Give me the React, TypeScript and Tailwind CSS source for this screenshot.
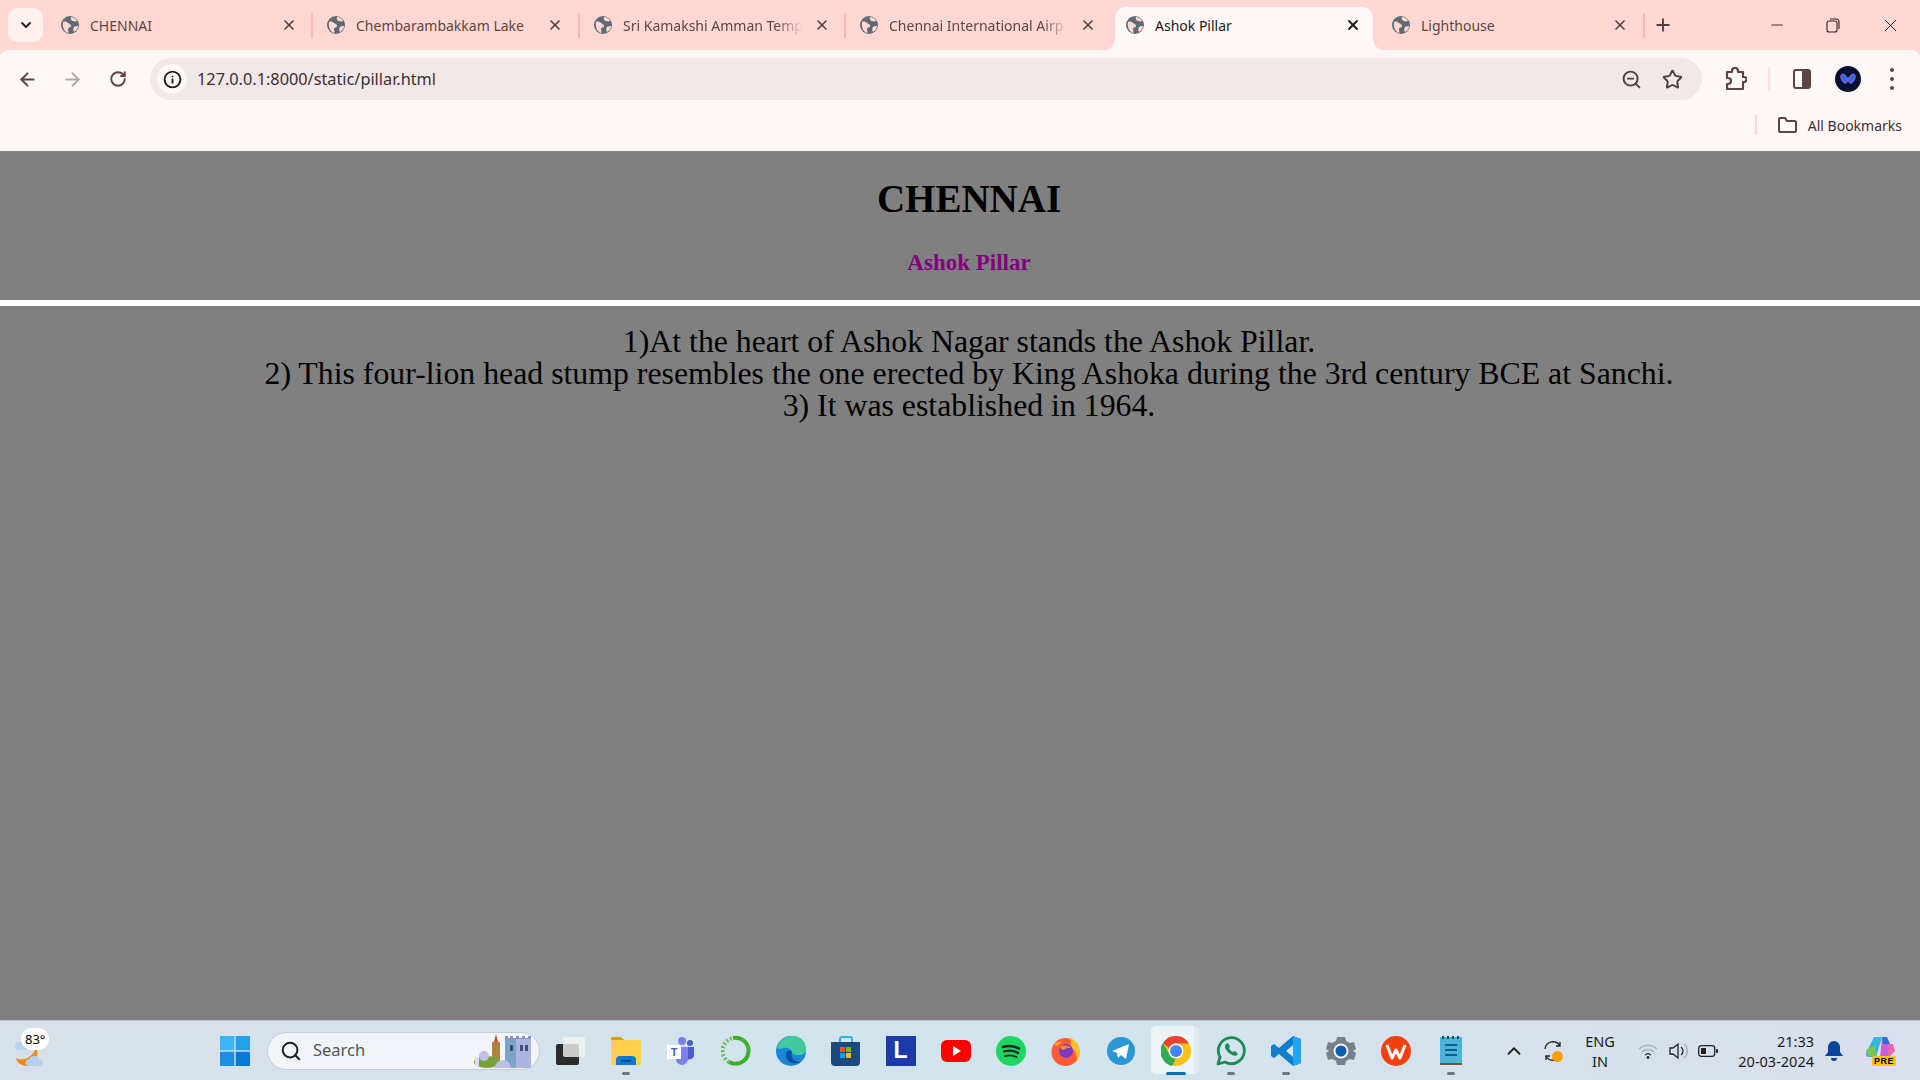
import { ArrowLeft, ArrowRight, ChevronDown, ChevronUp, Info, Minus, Plus, RotateCw, Search, Star, X, ZoomOut } from 'lucide-react';
import type { ReactNode } from 'react';

const uiFont = "font-['Noto_Sans','Open_Sans',sans-serif]";
const serif = "font-['Liberation_Serif',serif]";

function Globe() {
  return (
    <svg width="18" height="18" viewBox="0 0 18 18" className="shrink-0">
      <circle cx="9" cy="9" r="9" fill="#5f6b72" />
      <path d="M2 6c2-1 4 0 5 1s3 1 3 3-3 1-3 3 1 3 0 4C4 16 1 12 2 6zM10 1c2 0 5 1 6 4-2 1-3 0-4 0s-3-2-2-4zM13 11c1-1 3-1 4-1 0 3-2 5-4 6-1-1-1-4 0-5z" fill="#ffd8d4" />
    </svg>
  );
}

function Tab({ title, width, pad = 'pl-[16px]', faded, sep = true }: { title: string; width: string; pad?: string; faded?: boolean; sep?: boolean }) {
  return (
    <div className={`flex h-[42px] shrink-0 items-center ${pad} ${width}`}>
      <Globe />
      <span className={`ml-[11px] w-[180px] overflow-hidden whitespace-nowrap text-[14px] text-[#5b4644] ${faded ? '[mask-image:linear-gradient(to_right,black_85%,transparent)]' : ''}`}>
        {title}
      </span>
      <X size={16} strokeWidth={2.4} className="ml-[11px] shrink-0 text-[#4f3f3e]" />
      {sep && <div className="-mr-[2px] ml-auto h-[25px] w-[2px] bg-[#fdb8b2]" />}
    </div>
  );
}

function ActiveTab() {
  return (
    <div className="relative flex h-[43px] w-[258px] shrink-0 items-center self-end rounded-t-[11px] bg-[#fff8f6] pb-[7px] pl-[11px]">
      <div className="absolute -left-[11px] bottom-0 h-[11px] w-[11px] bg-[#fff8f6]">
        <div className="h-full w-full rounded-br-[11px] bg-[#ffd8d4]" />
      </div>
      <Globe />
      <span className="ml-[11px] w-[180px] text-[14px] text-[#201a1a]">Ashok Pillar</span>
      <X size={16} strokeWidth={2.8} className="ml-[10px] text-[#201a1a]" />
      <div className="absolute -right-[11px] bottom-0 h-[11px] w-[11px] bg-[#fff8f6]">
        <div className="h-full w-full rounded-bl-[11px] bg-[#ffd8d4]" />
      </div>
    </div>
  );
}

function TabStrip() {
  return (
    <div className={`flex h-[50px] shrink-0 items-start bg-[#ffd8d4] ${uiFont}`}>
      <div className="ml-[8px] mt-[8px] flex h-[34px] w-[35px] items-center justify-center rounded-[10px] bg-[#fff1ef]">
        <ChevronDown size={16} strokeWidth={3} className="text-[#33201f]" />
      </div>
      <div className="ml-[2px] flex h-[50px] items-center">
        <Tab title="CHENNAI" width="w-[266px]" />
        <Tab title="Chembarambakkam Lake" width="w-[267px]" />
        <Tab title="Sri Kamakshi Amman Temp" width="w-[266px]" faded />
        <Tab title="Chennai International Airp" width="w-[271px]" faded sep={false} />
        <ActiveTab />
        <Tab title="Lighthouse" width="w-[270px]" pad="pl-[19px]" />
        <Plus size={20} strokeWidth={2.2} className="ml-[10px] text-[#4f3f3e]" />
      </div>
      <div className="ml-auto flex h-[50px] items-center text-[#33201f]">
        <Minus size={18} strokeWidth={1.2} className="mr-[40px]" />
        <svg width="14" height="16" viewBox="0 0 14 16" fill="none" stroke="#33201f" strokeWidth="1.1" className="mr-[40px]">
          <rect x="1" y="4" width="10" height="11" rx="2" />
          <path d="M4 2h6a3 3 0 0 1 3 3v7" />
        </svg>
        <X size={21} strokeWidth={1.1} className="mr-[19px]" />
      </div>
    </div>
  );
}

function ToolIcon({ children, className }: { children: ReactNode; className: string }) {
  return <div className={`flex shrink-0 items-center justify-center ${className}`}>{children}</div>;
}

function Toolbar() {
  return (
    <div className={`h-[101px] shrink-0 rounded-t-[8px] bg-[#fff8f6] ${uiFont}`}>
      <div className="flex h-[50px] items-end">
        <ToolIcon className="ml-[16px] h-[42px] w-[22px]"><ArrowLeft size={21} strokeWidth={2.3} className="text-[#5c4442]" /></ToolIcon>
        <ToolIcon className="ml-[23px] h-[42px] w-[22px]"><ArrowRight size={21} strokeWidth={2.3} className="text-[#b3a6a5]" /></ToolIcon>
        <ToolIcon className="ml-[24px] h-[42px] w-[22px]"><RotateCw size={18} strokeWidth={2.6} className="text-[#5c4442]" /></ToolIcon>
        <div className="ml-[21px] flex h-[42px] w-[1552px] items-center rounded-full bg-[#f1e8e9]">
          <div className="ml-[7px] flex h-[30px] w-[30px] items-center justify-center rounded-full bg-[#fff8f6]">
            <Info size={19} strokeWidth={2.4} className="text-[#201a1a]" />
          </div>
          <span className="ml-[10px] text-[16.3px] text-[#3f2e2d]">127.0.0.1:8000/static/pillar.html</span>
          <ZoomOut size={21} strokeWidth={2.2} className="ml-auto text-[#4f3f3e]" />
          <Star size={21} strokeWidth={2.2} className="ml-[20px] mr-[19px] text-[#4f3f3e]" />
        </div>
        <ToolIcon className="ml-[22px] h-[42px] w-[24px]">
          <svg width="22" height="24" viewBox="0 0 22 24" fill="none" stroke="#5c4442" strokeWidth="2.2" strokeLinejoin="round">
            <path d="M2 5h5V4a3 3 0 0 1 6 0v1h5v5h1a2 2 0 0 1 0 5h-1v7H2v-5h1a3 3 0 0 0 0-6H2z" />
          </svg>
        </ToolIcon>
        <div className="mb-[9px] ml-[20px] h-[24px] w-[2px] bg-[#ffdfdb]" />
        <ToolIcon className="ml-[23px] h-[42px] w-[18px]">
          <svg width="18" height="20" viewBox="0 0 18 20">
            <rect x="1" y="1" width="16" height="18" rx="2" fill="none" stroke="#5c4442" strokeWidth="2" />
            <rect x="9" y="1" width="8" height="18" fill="#5c4442" />
          </svg>
        </ToolIcon>
        <ToolIcon className="ml-[24px] h-[42px] w-[26px]">
          <svg width="26" height="26" viewBox="0 0 26 26">
            <circle cx="13" cy="13" r="13" fill="#04102e" />
            <path d="M13 13C11 8 7 7 6 9s1 7 3 8c2 1 4-1 4-4zM13 13c2-5 6-6 7-4s-1 7-3 8c-2 1-4-1-4-4z" fill="#2f6de0" stroke="#b14ad6" strokeWidth="1" />
          </svg>
        </ToolIcon>
        <ToolIcon className="ml-[29px] h-[42px] w-[4px]">
          <div className="flex flex-col gap-[5px]">
            <div className="h-[4px] w-[4px] rounded-full bg-[#5c4442]" />
            <div className="h-[4px] w-[4px] rounded-full bg-[#5c4442]" />
            <div className="h-[4px] w-[4px] rounded-full bg-[#5c4442]" />
          </div>
        </ToolIcon>
      </div>
      <div className="flex h-[50px] items-center justify-end pr-[18px]">
        <div className="h-[20px] w-[2px] bg-[#ffd8d4]" />
        <svg width="21" height="18" viewBox="0 0 21 18" fill="none" stroke="#5c4442" strokeWidth="2" className="ml-[20px]">
          <path d="M2 3a1 1 0 0 1 1-1h5l2 3h8a1 1 0 0 1 1 1v9a1 1 0 0 1-1 1H3a1 1 0 0 1-1-1z" />
        </svg>
        <span className="ml-[10px] text-[14px] text-[#3f2e2d]">All Bookmarks</span>
      </div>
    </div>
  );
}

function Page() {
  return (
    <main className={`min-h-0 flex-1 bg-[#808080] text-center ${serif}`}>
      <div className="pl-[18px]">
        <h1 className="pt-[26px] text-[39px] font-bold leading-[44px] text-black">CHENNAI</h1>
        <h2 className="mt-[29px] text-[23px] font-bold leading-[26px] text-[#800080]">Ashok Pillar</h2>
      </div>
      <hr className="mt-[24px] h-[6px] border-0 bg-white" />
      <p className="mt-[20px] pl-[18px] text-[31.8px] leading-[32px] text-black">
        1)At the heart of Ashok Nagar stands the Ashok Pillar.
        <br />
        2) This four-lion head stump resembles the one erected by King Ashoka during the 3rd century BCE at Sanchi.
        <br />
        3) It was established in 1964.
      </p>
    </main>
  );
}

function AppCell({ children, pill, active }: { children: ReactNode; pill?: boolean; active?: boolean }) {
  return (
    <div className="relative flex h-[59px] w-[55px] shrink-0 items-center justify-center">
      {active && <div className="absolute left-[3px] top-[5px] h-[48px] w-[48px] rounded-[5px] border-r-[5px] border-[#dfeaf1] bg-[#edf4f8]" />}
      <div className="relative">{children}</div>
      {pill && <div className={`absolute bottom-[5px] h-[3px] rounded-full ${active ? 'w-[20px] bg-[#0f6cbd]' : 'w-[8px] bg-[#6d7780]'}`} />}
    </div>
  );
}

const icons: { key: string; pill?: boolean; active?: boolean; svg: ReactNode }[] = [
  {
    key: 'taskview',
    svg: (
      <svg width="30" height="30" viewBox="0 0 30 30">
        <rect x="0" y="8" width="23" height="21" rx="2" fill="#2a2a2a" />
        <rect x="7" y="1" width="22" height="20" rx="2" fill="#f3f3f3" fillOpacity=".8" />
      </svg>
    ),
  },
  {
    key: 'explorer',
    pill: true,
    svg: (
      <svg width="30" height="30" viewBox="0 0 30 30">
        <path d="M0 2a1 1 0 0 1 1-1h9l3 3h-13z" fill="#d99e0b" />
        <rect x="0" y="4" width="30" height="25" rx="1" fill="#ffcf4d" />
        <path d="M5 24a4 4 0 0 1 4-4h12a4 4 0 0 1 4 4v5H5z" fill="#0f78cf" />
        <rect x="10" y="24" width="10" height="1.5" fill="#083f7a" />
      </svg>
    ),
  },
  {
    key: 'teams',
    svg: (
      <svg width="30" height="30" viewBox="0 0 30 30">
        <circle cx="16" cy="5" r="4" fill="#7b83eb" />
        <circle cx="24" cy="7" r="3" fill="#5059c9" />
        <path d="M20 11h8v9a5 5 0 0 1-7 3z" fill="#5059c9" />
        <path d="M9 11h13v12a6 6 0 0 1-12 0z" fill="#7b83eb" />
        <rect x="1" y="9" width="14" height="14" fill="#fff" />
        <text x="8" y="20" textAnchor="middle" fontSize="11" fontWeight="700" fill="#4b53bc" fontFamily="Liberation Sans">T</text>
      </svg>
    ),
  },
  {
    key: 'ring',
    svg: (
      <svg width="30" height="30" viewBox="0 0 30 30" fill="none">
        <path d="M12 2a13 13 0 1 1-4 24" stroke="#3fae2a" strokeWidth="4" />
        <path d="M8 26A13 13 0 0 1 12 2" stroke="#6cbf5a" strokeWidth="4" strokeDasharray="2 2" />
      </svg>
    ),
  },
  {
    key: 'edge',
    svg: (
      <svg width="30" height="30" viewBox="0 0 30 30">
        <circle cx="15" cy="15" r="15" fill="#1a86d8" />
        <path d="M1 11C4 2 12 0 17 0c8 0 13 6 13 13 0 5-4 6-8 6-5 0-6-2-6-3 0-3-5-5-9-4-3 1-5 2-6-1z" fill="#43c9a0" />
        <path d="M16 16c-4-4-8 1-5 7 2 4 7 6 13 3-6 0-10-4-8-10z" fill="#0c4f9e" />
      </svg>
    ),
  },
  {
    key: 'store',
    svg: (
      <svg width="30" height="30" viewBox="0 0 30 30">
        <path d="M9 6V3a2 2 0 0 1 2-2h8a2 2 0 0 1 2 2v3" fill="none" stroke="#29b5e8" strokeWidth="2" />
        <path d="M0 6h29v20a4 4 0 0 1-4 4H4a4 4 0 0 1-4-4z" fill="#1d4a7e" />
        <rect x="9" y="11" width="5" height="5" fill="#f25022" />
        <rect x="15" y="11" width="5" height="5" fill="#7fba00" />
        <rect x="9" y="17" width="5" height="5" fill="#00a4ef" />
        <rect x="15" y="17" width="5" height="5" fill="#ffb900" />
      </svg>
    ),
  },
  {
    key: 'lens',
    svg: (
      <div className="flex h-[30px] w-[30px] items-center justify-center bg-[#1d3aa8] font-['Liberation_Sans',sans-serif] text-[23px] font-bold text-white">L</div>
    ),
  },
  {
    key: 'youtube',
    svg: (
      <svg width="30" height="22" viewBox="0 0 30 22">
        <rect width="30" height="22" rx="6" fill="#f00" />
        <path d="M12 6l8 5-8 5z" fill="#fff" />
      </svg>
    ),
  },
  {
    key: 'spotify',
    svg: (
      <svg width="30" height="30" viewBox="0 0 30 30" fill="none" stroke="#15232a" strokeLinecap="round">
        <circle cx="15" cy="15" r="15" fill="#1ed760" stroke="none" />
        <path d="M7 11c6-2 11-1 16 1.500" strokeWidth="2.600" />
        <path d="M8 15.500c5-1.500 10-1 14 1.500" strokeWidth="2.200" />
        <path d="M9 20c4-1 8-.8 11.500 1" strokeWidth="1.900" />
      </svg>
    ),
  },
  {
    key: 'firefox',
    svg: (
      <svg width="30" height="30" viewBox="0 0 30 30">
        <circle cx="14.500" cy="16" r="14" fill="#ff5a36" />
        <path d="M19 1c4 3 10 8 10 15 0 4-1 6-3 9 0-6-2-12-7-14 1-3 1-6 0-10z" fill="#ffbd2e" />
        <path d="M3 8c2-2 5-3 8-2-1 2-4 2-4 4-2 0-3-1-4-2z" fill="#ff9a2e" />
        <circle cx="15" cy="15" r="7" fill="#7a3bc2" />
        <path d="M9 11c3-2 8-2 11 1-3 0-6 0-7 2-2 0-3-1-4-3z" fill="#ff8a2e" />
      </svg>
    ),
  },
  {
    key: 'telegram',
    svg: (
      <svg width="28" height="28" viewBox="0 0 28 28">
        <circle cx="14" cy="14" r="14" fill="#2a97d4" />
        <path d="M5 14l17-7-3 15-5-4-3 3-1-5z" fill="#fff" />
      </svg>
    ),
  },
  {
    key: 'chrome',
    pill: true,
    active: true,
    svg: (
      <svg width="30" height="30" viewBox="0 0 30 30">
        <circle cx="15" cy="15" r="15" fill="#fbc116" />
        <path d="M15 0a15 15 0 0 1 13 7.500H15a7.500 7.500 0 0 0-7 4.500L2 7a15 15 0 0 1 13-7z" fill="#ea4335" />
        <path d="M2 7l6.500 11.500a7.500 7.500 0 0 0 6.500 4L11 30A15 15 0 0 1 2 7z" fill="#34a853" />
        <circle cx="15" cy="15" r="7.500" fill="#fff" />
        <circle cx="15" cy="15" r="6" fill="#4285f4" />
      </svg>
    ),
  },
  {
    key: 'whatsapp',
    pill: true,
    svg: (
      <svg width="30" height="30" viewBox="0 0 30 30" fill="none">
        <path d="M2 28l2-7a13 13 0 1 1 5 5z" stroke="#1d8a55" strokeWidth="2.800" strokeLinejoin="round" />
        <path d="M10 8c-2 2-1 6 3 9s7 4 9 1l-3-3-2 1c-2-1-3-2-4-4l1-2-2-3z" fill="#1d8a55" />
      </svg>
    ),
  },
  {
    key: 'vscode',
    pill: true,
    svg: (
      <svg width="30" height="30" viewBox="0 0 30 30">
        <path d="M22 0l8 3v24l-8 3-14-12-5 4-3-2v-10l3-2 5 4z" fill="#0f7fcc" />
        <path d="M22 0l8 3v24l-8 3z" fill="#23a6f0" />
        <path d="M22 9l-7 6 7 6z" fill="#d5e3ea" />
      </svg>
    ),
  },
  {
    key: 'settings',
    svg: (
      <svg width="30" height="30" viewBox="0 0 30 30">
        <path d="M11 1h8l1 4 4 2 4-1 2 7-3 2 3 2-2 7-4-1-4 2-1 4h-8l-1-4-4-2-4 1-2-7 3-2-3-2 2-7 4 1 4-2z" fill="#76808a" />
        <circle cx="15" cy="15" r="7.500" fill="#eef3f6" />
        <circle cx="15" cy="15" r="5.500" fill="#0f5fb0" />
      </svg>
    ),
  },
  {
    key: 'wps',
    svg: (
      <svg width="30" height="30" viewBox="0 0 30 30" fill="none">
        <circle cx="15" cy="15" r="15" fill="#f4400f" />
        <path d="M6 9l5 13 4-8 4 8 5-13" stroke="#fff" strokeWidth="3" strokeLinejoin="round" />
      </svg>
    ),
  },
  {
    key: 'notepad',
    pill: true,
    svg: (
      <svg width="22" height="30" viewBox="0 0 22 30">
        <rect y="1" width="22" height="28" rx="1" fill="#4cb4d8" />
        <rect y="27" width="22" height="2" fill="#8a4b1f" />
        <path d="M2 0h2v3H2zM7 0h2v3H7zM12 0h2v3h-2zM17 0h2v3h-2z" fill="#0f4c6e" />
        <path d="M5 9h12M5 14h12M5 19h12" stroke="#0f5f88" strokeWidth="1.800" />
      </svg>
    ),
  },
];

function WeatherIcon() {
  return (
    <div className="relative ml-[12px] h-[46px] w-[42px]">
      <svg width="34" height="38" viewBox="0 0 34 38" className="absolute left-0 top-[6px]">
        <path d="M3 12a4 4 0 0 1 4-4h8v8H6a3 3 0 0 1-3-4z" fill="#b8d3f0" />
        <path d="M4 24c3 2 9 2 13-1s6-6 7-9c4 6 0 18-9 18-5 0-10-3-11-8z" fill="#f08a12" />
        <path d="M14 31a4 4 0 0 1 3-6 6 6 0 0 1 11 1 3 3 0 0 1 0 6H16z" fill="#b5d0ee" />
      </svg>
      <div className={`absolute left-[9px] top-0 rounded-full bg-white px-[4px] text-[13px] leading-[22px] text-black ${uiFont}`}>83°</div>
    </div>
  );
}

function SearchArt() {
  return (
    <svg width="62" height="36" viewBox="0 0 62 36" className="ml-auto mr-[6px]">
      <rect x="34" y="6" width="26" height="29" fill="#aeb4e0" />
      <rect x="34" y="6" width="11" height="29" fill="#7fa4c9" />
      <path d="M34 6h26V3h-3v2h-3V3h-3v2h-3V3h-3v2h-3V3h-3v2h-2V3h-3z" fill="#8a90c4" />
      <rect x="39" y="12" width="3" height="6" fill="#3b4d70" />
      <rect x="49" y="12" width="3" height="6" fill="#3b4d70" />
      <rect x="54" y="12" width="3" height="6" fill="#3b4d70" />
      <rect x="21" y="9" width="8" height="22" fill="#b0833c" />
      <path d="M25 1l2 8h-4z" fill="#c9462c" />
      <ellipse cx="16" cy="29" rx="13" ry="6" fill="#7aa03a" />
      <circle cx="13" cy="23" r="5" fill="#c6bfe6" />
      <rect x="4" y="24" width="4" height="9" fill="#d9dcf0" />
      <path d="M24 35a8 8 0 0 1 16 0z" fill="#c2bce8" />
    </svg>
  );
}

function Taskbar() {
  return (
    <footer className={`flex h-[60px] shrink-0 items-center border-t border-[#b9c0c8] bg-gradient-to-r from-[#d8e1eb] via-[#d1e4ec] to-[#d9dfeb] text-[#1b1b1b] ${uiFont}`}>
      <WeatherIcon />
      <svg width="30" height="30" viewBox="0 0 30 30" className="ml-[166px] shrink-0">
        <rect width="14.300" height="14.300" fill="#3bb5f4" />
        <rect x="15.700" width="14.300" height="14.300" fill="#22a0ea" />
        <rect y="15.700" width="14.300" height="14.300" fill="#1b8fe2" />
        <rect x="15.700" y="15.700" width="14.300" height="14.300" fill="#0a78d6" />
      </svg>
      <div className="ml-[17px] flex h-[38px] w-[273px] shrink-0 items-center rounded-full border border-[#c2ccd6] bg-[#f1f5f9]">
        <Search size={22} strokeWidth={2.2} className="ml-[12px] text-[#1f1f1f]" />
        <span className="ml-[11px] text-[16.5px] text-[#555]">Search</span>
        <SearchArt />
      </div>
      <div className="ml-[3px] flex">
        {icons.map((icon) => (
          <AppCell key={icon.key} pill={icon.pill} active={icon.active}>
            {icon.svg}
          </AppCell>
        ))}
      </div>
      <ChevronUp size={22} strokeWidth={2} className="ml-[25px] shrink-0 text-[#222]" />
      <div className="relative ml-[18px] h-[22px] w-[22px] shrink-0">
        <svg width="20" height="22" viewBox="0 0 20 22" fill="none" stroke="#222" strokeWidth="1.300">
          <path d="M2 9a8 8 0 0 1 15-3M17 2v4h-4M18 13a8 8 0 0 1-15 3M3 20v-4h4" />
        </svg>
        <div className="absolute left-[9px] top-[11px] h-[11px] w-[11px] rounded-full bg-[#ff9d0a]" />
      </div>
      <div className="ml-[17px] flex w-[36px] shrink-0 flex-col items-center text-[14.5px] leading-[20px]">
        <span>ENG</span>
        <span>IN</span>
      </div>
      <svg width="20" height="16" viewBox="0 0 20 16" fill="none" className="ml-[20px] shrink-0">
        <path d="M1 6a13 13 0 0 1 18 0M4 9a9 9 0 0 1 12 0" stroke="#a5adb5" strokeWidth="1.300" />
        <path d="M7 12a4.500 4.500 0 0 1 6 0" stroke="#222" strokeWidth="1.300" />
        <circle cx="10" cy="14.500" r="1.400" fill="#222" />
      </svg>
      <svg width="20" height="18" viewBox="0 0 20 18" fill="none" strokeWidth="1.300" className="ml-[11px] shrink-0">
        <path d="M1 6h3l5-4v14l-5-4H1z" stroke="#222" />
        <path d="M12 5a5 5 0 0 1 0 8" stroke="#222" />
        <path d="M15 2a9 9 0 0 1 0 14" stroke="#a5adb5" />
      </svg>
      <svg width="20" height="12" viewBox="0 0 20 12" className="ml-[9px] shrink-0">
        <rect x=".7" y=".7" width="16" height="10.600" rx="2.500" fill="none" stroke="#222" strokeWidth="1.300" />
        <rect x="3" y="3" width="5" height="6" fill="#222" />
        <rect x="18" y="4" width="2" height="4" rx="1" fill="#222" />
      </svg>
      <div className="ml-auto mr-[11px] flex shrink-0 flex-col items-end text-[14.5px] leading-[20px]">
        <span>21:33</span>
        <span>20-03-2024</span>
      </div>
      <svg width="18" height="20" viewBox="0 0 18 20" className="mr-[23px] shrink-0">
        <path d="M9 0a6 6 0 0 1 6 6v5l3 4H0l3-4V6a6 6 0 0 1 6-6z" fill="#0a459c" />
        <path d="M6 17h6a3 3 0 0 1-6 0z" fill="#0a459c" />
      </svg>
      <div className="relative mr-[24px] h-[30px] w-[30px] shrink-0">
        <svg width="30" height="24" viewBox="0 0 30 24">
          <path d="M8 1h8l-6 20H3a3 3 0 0 1-3-4z" fill="#35b6dc" />
          <path d="M0 14l8-4 3 10H3z" fill="#7cc44a" />
          <path d="M16 1h4l8 14-6 7h-8z" fill="#c85fd8" />
          <path d="M16 1h5l3 7h-7z" fill="#2c6fd6" />
          <path d="M22 8h5l2 7-7 7z" fill="#e56ab0" />
        </svg>
        <div className="absolute bottom-0 left-[6px] rounded-[2px] bg-[#ffc800] px-[2px] font-['Liberation_Sans',sans-serif] text-[9px] font-bold leading-[10px] tracking-[0.5px] text-black">PRE</div>
      </div>
    </footer>
  );
}

export default function App() {
  return (
    <div className="flex h-[1080px] w-[1920px] flex-col overflow-hidden bg-[#ffd8d4]">
      <TabStrip />
      <Toolbar />
      <Page />
      <Taskbar />
    </div>
  );
}
